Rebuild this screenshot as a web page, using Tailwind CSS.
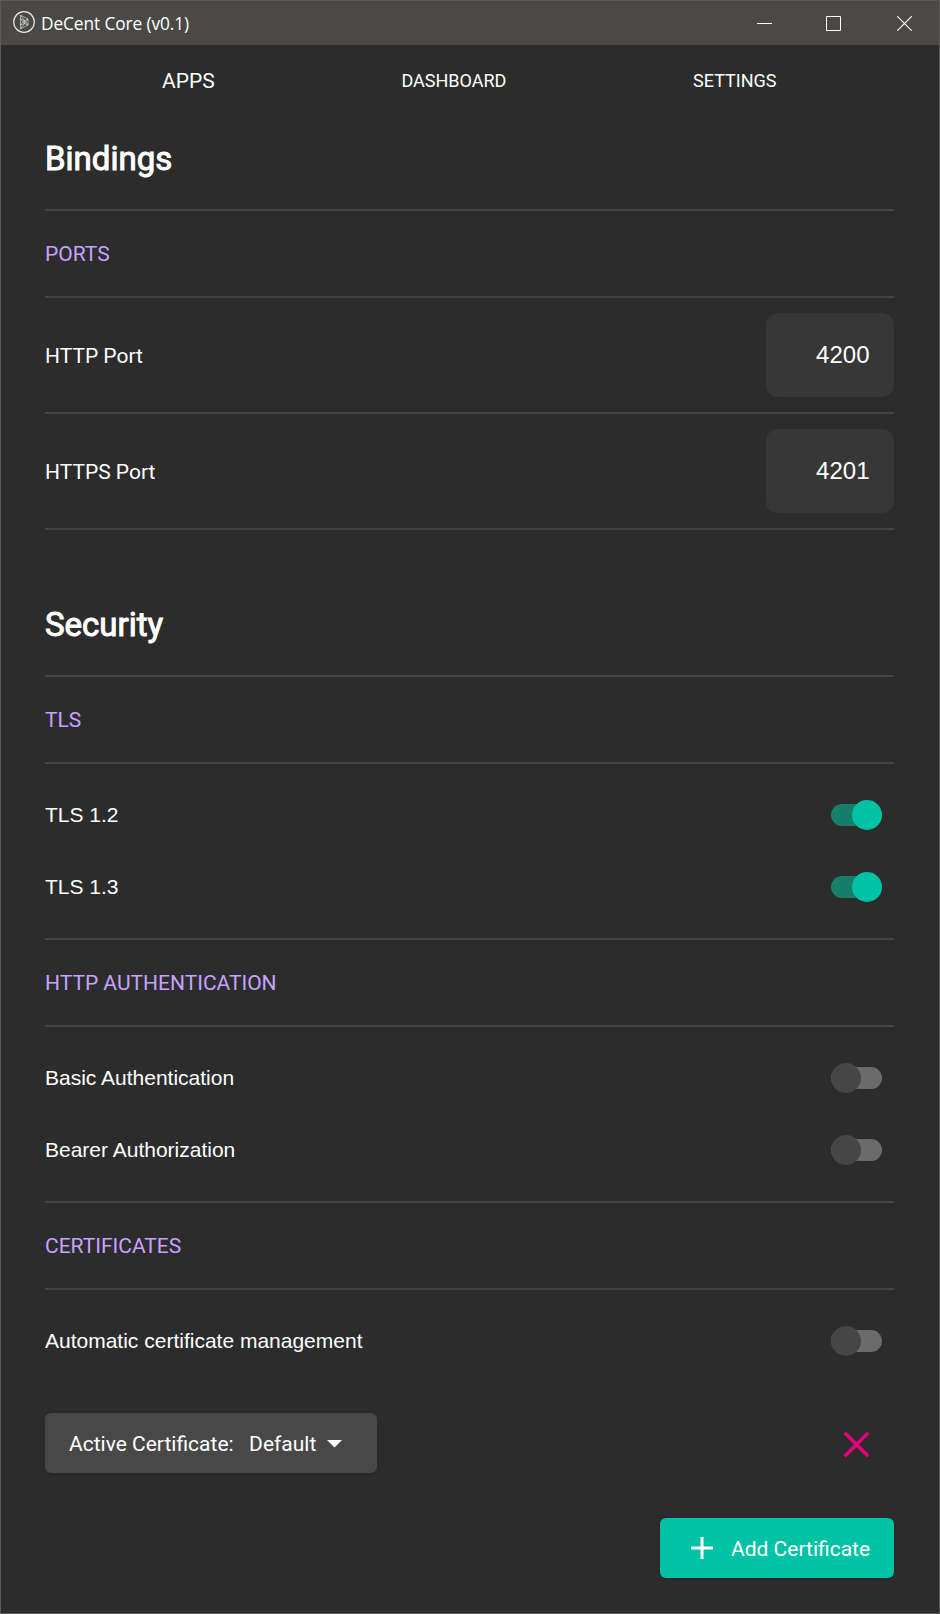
<!DOCTYPE html>
<html lang="en">
<head>
<meta charset="utf-8">
<title>DeCent Core (v0.1)</title>
<script src="https://cdn.jsdelivr.net/npm/@tailwindcss/browser@4"></script>
</head>
<body class="bg-[#2c2c2c]">
<div class="flex h-[1614px] w-[940px] flex-col border border-[#5b5a58] bg-[#2c2c2c] font-['Roboto',sans-serif] text-[21px] leading-6 text-white">
  <header class="flex h-11 shrink-0 items-center bg-[#4a4946] pl-3">
    <svg class="-mt-0.5 size-[22px]" viewBox="0 0 22 22" fill="none" stroke="#e8e8e8">
      <circle cx="11" cy="11" r="10.3" stroke-width="1.2"/>
      <path d="M7.500 4.200L15 8V14L7.500 17.800ZM7.500 4.200L11.500 9.500L15 8M7.500 17.800L11.500 12.500L15 14M7.500 8L11.500 9.500V12.500L7.500 14M7.500 8L11.500 12.500M7.500 14L11.500 9.500L15 14M11.500 12.500L15 8" stroke-width=".6"/>
    </svg>
    <h1 class="mt-0.5 ml-1.5 flex-1 font-['Open_Sans',sans-serif] text-[17.3px] tracking-[-0.1px]">DeCent Core (v0.1)</h1>
    <svg class="mr-[54px] h-[15px] w-[15px]" viewBox="0 0 15 15" stroke="#fff"><path d="M0 7.500H15"/></svg>
    <svg class="mr-14 h-[15px] w-[15px]" viewBox="0 0 15 15" fill="none" stroke="#fff"><path d="M.5 .5H14.500V14.500H.5Z"/></svg>
    <svg class="mr-[27px] h-[15px] w-[15px]" viewBox="0 0 15 15" stroke="#fff"><path d="M.3 .3L14.700 14.700M14.700 .3L.3 14.700" stroke-width="1.100"/></svg>
  </header>
  <nav class="flex h-[71px] shrink-0 items-center justify-between pr-[162.5px] pl-[161px]">
    <a>APPS</a>
    <a class="text-[18px]">DASHBOARD</a>
    <a class="text-[18px]">SETTINGS</a>
  </nav>
  <main class="flex flex-col pr-[45px] pl-11">
    <section>
      <h2 class="h-[93px] pt-[23px] text-[33px] leading-10 [-webkit-text-stroke:1px_white]">Bindings</h2>
      <h3 class="flex h-[89px] items-center border-y-2 border-[#444] text-[#c8a2ff]">PORTS</h3>
      <div class="flex h-[116px] items-center justify-between border-b-2 border-[#444]">
        <span class="pt-0.5">HTTP Port</span>
        <div class="flex h-[84px] w-32 items-center justify-end rounded-xl bg-[#373737] pr-[24.5px] font-['Liberation_Sans',sans-serif] text-2xl">4200</div>
      </div>
      <div class="flex h-[116px] items-center justify-between border-b-2 border-[#444]">
        <span class="pt-0.5">HTTPS Port</span>
        <div class="flex h-[84px] w-32 items-center justify-end rounded-xl bg-[#373737] pr-[24.5px] font-['Liberation_Sans',sans-serif] text-2xl">4201</div>
      </div>
    </section>
    <section>
      <h2 class="h-[145px] pt-[75px] text-[33px] leading-10 [-webkit-text-stroke:1px_white]">Security</h2>
      <h3 class="flex h-[89px] items-center border-y-2 border-[#444] text-[#c8a2ff]">TLS</h3>
      <div class="py-[15px] font-['Liberation_Sans',sans-serif]">
        <div class="flex h-[72px] items-center justify-between pr-3">
          <span>TLS 1.2</span>
          <div class="flex h-[22px] w-[51px] items-center justify-end rounded-full bg-[#167f6c]"><div class="size-[30px] shrink-0 rounded-full bg-[#00c3a5]"></div></div>
        </div>
        <div class="flex h-[72px] items-center justify-between pr-3">
          <span>TLS 1.3</span>
          <div class="flex h-[22px] w-[51px] items-center justify-end rounded-full bg-[#167f6c]"><div class="size-[30px] shrink-0 rounded-full bg-[#00c3a5]"></div></div>
        </div>
      </div>
      <h3 class="flex h-[89px] items-center border-y-2 border-[#444] text-[#c8a2ff]">HTTP AUTHENTICATION</h3>
      <div class="py-[15px] font-['Liberation_Sans',sans-serif]">
        <div class="flex h-[72px] items-center justify-between pr-3">
          <span>Basic Authentication</span>
          <div class="flex h-[22px] w-[51px] items-center rounded-full bg-[#6b6b6b]"><div class="size-[30px] shrink-0 rounded-full bg-[#464646]"></div></div>
        </div>
        <div class="flex h-[72px] items-center justify-between pr-3">
          <span>Bearer Authorization</span>
          <div class="flex h-[22px] w-[51px] items-center rounded-full bg-[#6b6b6b]"><div class="size-[30px] shrink-0 rounded-full bg-[#464646]"></div></div>
        </div>
      </div>
      <h3 class="flex h-[89px] items-center border-y-2 border-[#444] text-[#c8a2ff]">CERTIFICATES</h3>
      <div class="mt-[15px] flex h-[72px] items-center justify-between pr-3 font-['Liberation_Sans',sans-serif]">
        <span>Automatic certificate management</span>
        <div class="flex h-[22px] w-[51px] items-center rounded-full bg-[#6b6b6b]"><div class="size-[30px] shrink-0 rounded-full bg-[#464646]"></div></div>
      </div>
      <div class="mt-9 flex items-center justify-between pr-6">
        <button class="flex h-[60px] w-[332px] items-center rounded-md bg-[#484848] pl-6 shadow-sm">
          <span class="pt-0.5">Active Certificate:</span>
          <span class="ml-[15.5px] pt-0.5">Default</span>
          <svg class="mt-px ml-[11px] h-2 w-[15px]" viewBox="0 0 15 8" fill="#fff"><path d="M0 0H15L7.500 7.500Z"/></svg>
        </button>
        <svg class="mt-[3px] size-[27px]" viewBox="0 0 27 27" stroke="#e6007e" stroke-width="3.5"><path d="M1.700 1.700L25.300 25.300M25.300 1.700L1.700 25.300"/></svg>
      </div>
      <div class="mt-[45px] flex justify-end">
        <button class="flex h-[60px] w-[234px] items-center rounded-md bg-[#00c3a5] pl-[31px] shadow-sm">
          <svg class="size-[22px]" viewBox="0 0 22 22" stroke="#fff" stroke-width="3"><path d="M11 0V22M0 11H22"/></svg>
          <span class="ml-[18px] pt-0.5">Add Certificate</span>
        </button>
      </div>
    </section>
  </main>
</div>
</body>
</html>
